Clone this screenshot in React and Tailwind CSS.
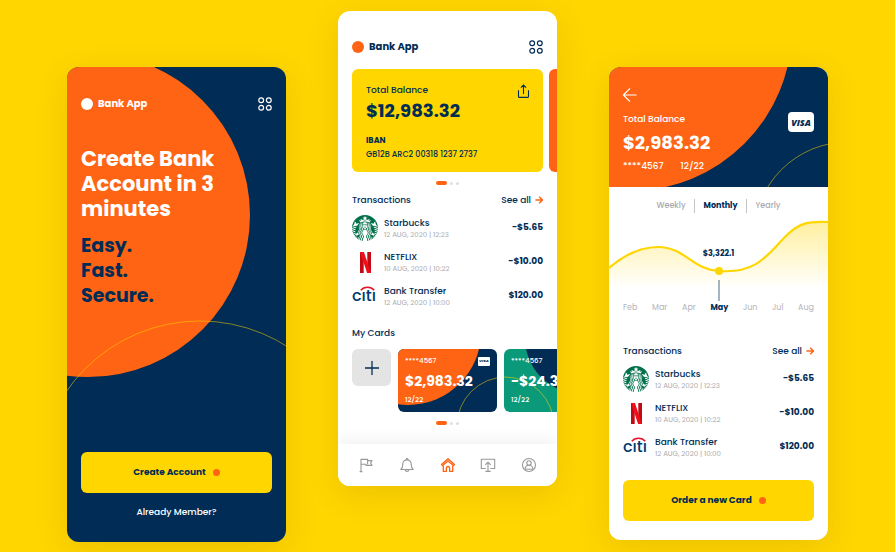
import React from "react";
import { SiStarbucks } from "react-icons/si";

const transactions = [
  { name: "Starbucks", date: "12 AUG, 2020 | 12:23", amount: "-$5.65", Logo: StarbucksLogo },
  { name: "NETFLIX", date: "10 AUG, 2020 | 10:22", amount: "-$10.00", Logo: NetflixLogo },
  { name: "Bank Transfer", date: "12 AUG, 2020 | 10:00", amount: "$120.00", Logo: CitiLogo },
];

const months = ["Feb", "Mar", "Apr", "May", "Jun", "Jul", "Aug"];

function StarbucksLogo() {
  return <SiStarbucks className="size-[26px] text-[#00704a]" aria-hidden="true" />;
}

function NetflixLogo() {
  return (
    <svg className="h-[21px] w-[11px]" viewBox="0 0 11 21" aria-hidden="true">
      <rect x="0" y="0" width="3.700" height="21" fill="#c20a14" />
      <rect x="7.300" y="0" width="3.700" height="21" fill="#c20a14" />
      <path d="M0 0h3.900L11 21H7.100z" fill="#ee0f1b" />
    </svg>
  );
}

function CitiLogo() {
  return (
    <span className="relative block w-[26px] text-[16px] leading-5 font-medium text-[#003b70]">
      <svg className="absolute top-0 left-2 h-[5px] w-[15px]" viewBox="0 0 15 5" fill="none" aria-hidden="true">
        <path d="M.8 4.300C4 .2 11 .2 14.200 4.300" stroke="#e4152b" strokeWidth="1.600" />
      </svg>
      cıtı
    </span>
  );
}

function Visa({ small }) {
  return small ? (
    <span className="flex h-[9px] w-3 items-center justify-center rounded-[1px] bg-white text-[4px] leading-none font-extrabold text-[#002c55] italic">
      VISA
    </span>
  ) : (
    <span className="flex h-5 w-[26px] items-center justify-center rounded-sm bg-white font-['Open_Sans'] text-[9px] leading-none font-extrabold text-[#002c55] italic">
      VISA
    </span>
  );
}

function Dots() {
  return (
    <div className="flex h-1 items-center justify-center gap-[3px]">
      <span className="h-1 w-[11px] rounded-full bg-[#ff6414]" />
      <span className="size-[3px] rounded-full bg-[#dcdfe4]" />
      <span className="size-[3px] rounded-full bg-[#dcdfe4]" />
    </div>
  );
}

function Header({ dot }) {
  return (
    <header className="flex h-4 items-center justify-between">
      <div className="flex items-center gap-[5px]">
        <span className={`size-3 rounded-full ${dot}`} />
        <span className="text-[10px] leading-4 font-bold">Bank App</span>
      </div>
      <button type="button" aria-label="Menu" className="size-[14px]">
        <svg viewBox="0 0 14 14" fill="none" stroke="currentColor" strokeWidth="1.200" aria-hidden="true">
          <circle cx="3.200" cy="3.200" r="2.400" />
          <circle cx="10.800" cy="3.200" r="2.400" />
          <circle cx="3.200" cy="10.800" r="2.400" />
          <circle cx="10.800" cy="10.800" r="2.400" />
        </svg>
      </button>
    </header>
  );
}

function Transactions() {
  return (
    <section className="px-[14px]">
      <div className="flex items-center justify-between text-[9px] leading-4 font-medium">
        <h2>Transactions</h2>
        <a href="#all" className="flex items-center gap-1">
          See all
          <svg className="size-2" viewBox="0 0 8 8" fill="none" stroke="#ff6414" strokeWidth="1.400" aria-hidden="true">
            <path d="M.4 4h7M4.200 .8L7.400 4 4.200 7.200" />
          </svg>
        </a>
      </div>
      <ul className="mt-[7px] flex flex-col gap-2">
        {transactions.map(({ name, date, amount, Logo }) => (
          <li key={name} className="flex h-[26px] items-center">
            <span className="flex w-[26px] justify-center">
              <Logo />
            </span>
            <div className="ml-1.5 flex-1">
              <p className="text-[9px] leading-[14px] font-medium">{name}</p>
              <p className="text-[7px] leading-[10px] text-[#a9a9ad]">{date}</p>
            </div>
            <span className="text-[9px] font-bold">{amount}</span>
          </li>
        ))}
      </ul>
    </section>
  );
}

function Phone({ className, children }) {
  return (
    <article
      className={`relative isolate min-w-0 overflow-hidden rounded-xl text-[#002c55] shadow-[0_8px_32px_rgba(110,80,0,0.14)] ${className}`}
    >
      {children}
    </article>
  );
}

function ActionButton({ children }) {
  return (
    <button
      type="button"
      className="flex h-[41px] w-full items-center justify-center gap-[7px] rounded-md bg-[#ffd600] text-[9px] font-bold text-[#002c55]"
    >
      {children}
      <span className="size-[7px] rounded-full bg-[#ff6414]" />
    </button>
  );
}

function Welcome() {
  return (
    <Phone className="mt-14 bg-[#002c55] px-[14px] pt-[29px] pb-[22px]">
      <svg className="absolute inset-0 -z-10 size-full" aria-hidden="true">
        <circle cx="21" cy="148" r="162" fill="#ff6414" />
        <circle cx="133" cy="416" r="162" fill="none" stroke="#ffd600" strokeOpacity=".65" strokeWidth=".8" />
      </svg>
      <div className="text-white">
        <Header dot="bg-white" />
        <h1 className="mt-[34px] max-w-[150px] text-[21px] leading-[25px] font-bold">Create Bank Account in 3 minutes</h1>
      </div>
      <p className="mt-3 max-w-[90px] text-[19px] leading-[25px] font-bold">Easy. Fast. Secure.</p>
      <div className="mt-36">
        <ActionButton>Create Account</ActionButton>
      </div>
      <a href="#login" className="mt-3 block text-center text-[9px] leading-[15px] font-medium text-white">
        Already Member?
      </a>
    </Phone>
  );
}

function MiniCard({ className, amount, visa, children }) {
  return (
    <div className={`relative isolate h-[63px] w-[99px] shrink-0 overflow-hidden rounded-md pt-[7px] pl-[7px] text-white ${className}`}>
      <svg className="absolute inset-0 -z-10 size-full" aria-hidden="true">
        {children}
      </svg>
      <div className="flex h-[10px] items-center justify-between pr-[7px]">
        <span className="text-[7px] leading-[10px] font-medium">****4567</span>
        {visa && <Visa small />}
      </div>
      <p className="mt-1.5 text-[14px] leading-[18px] font-bold">{amount}</p>
      <p className="mt-[5px] text-[7px] leading-[10px] font-medium">12/22</p>
    </div>
  );
}

const navItems = [
  {
    label: "Goals",
    icon: <path d="M2 .8v12.800M.6 13.600h2.800M2 1.400h6.600v1.200h4.400L11.600 5l1.400 2.400H7V6.200H2M8.600 2.600v3.600" />,
  },
  {
    label: "Notifications",
    icon: (
      <>
        <path d="M7 1.900c-2.700 0-4.200 1.900-4.200 4.300 0 3-.9 4.300-2 5.300h12.400c-1.100-1-2-2.300-2-5.300C11.200 3.800 9.700 1.900 7 1.900z" />
        <path d="M6.200 1.900V1.300a.8.8 0 011.600 0v.6M5.300 11.700a1.700 1.700 0 003.400 0" />
      </>
    ),
  },
  {
    label: "Home",
    active: true,
    icon: (
      <>
        <path d="M2.300 7.400v6h3.100v-3.300a1.600 1.600 0 013.200 0v3.300h3.100v-6" />
        <path d="M7 .7L.5 6.500l1.100 1.100L7 2.900l5.400 4.700 1.100-1.100z" />
      </>
    ),
  },
  {
    label: "Send",
    icon: (
      <>
        <path d="M4.600 10.500H.3V1.300h13.400v9.200H9.400M4.400 13.400h5.200" />
        <path d="M7 13.400V4.200M4.300 6.800L7 4.100l2.700 2.700" />
      </>
    ),
  },
  {
    label: "Profile",
    icon: (
      <>
        <circle cx="7" cy="7" r="6.500" />
        <circle cx="7" cy="5" r="2.200" />
        <path d="M3.100 11.200c0-2.500 1.500-4 3.900-4s3.900 1.500 3.900 4z" />
      </>
    ),
  },
];

function Home() {
  return (
    <Phone className="bg-white pt-7">
      <div className="px-[14px]">
        <Header dot="bg-[#ff6414]" />
      </div>
      <div className="mt-[14px] ml-[14px] flex gap-1.5 overflow-hidden">
        <section className="w-[calc(100%-14px)] shrink-0 rounded-md bg-[#ffd600] px-[14px] pt-[14px] pb-[11px]">
          <div className="flex h-[14px] items-start justify-between">
            <h2 className="text-[9px] leading-[14px] font-medium">Total Balance</h2>
            <button type="button" aria-label="Share" className="h-4 w-[11px]">
              <svg className="overflow-visible" viewBox="0 0 11 14" fill="none" stroke="currentColor" strokeWidth="1.100" aria-hidden="true">
                <path d="M.5 6.300v6.100c0 .6.4 1 1 1h8c.6 0 1-.4 1-1V6.300M5.500 10V1.200M2.900 3.600L5.500 1l2.600 2.600" />
              </svg>
            </button>
          </div>
          <p className="mt-0.5 text-[18px] leading-6 font-bold">$12,983.32</p>
          <h3 className="mt-3 text-[8px] leading-3 font-bold">IBAN</h3>
          <p className="mt-0.5 text-[8px] leading-3 font-medium">GB12B ARC2 00318 1237 2737</p>
        </section>
        <div className="w-full shrink-0 rounded-md bg-[#ff6414]" />
      </div>
      <div className="mt-[9px] mb-[7px]">
        <Dots />
      </div>
      <Transactions />
      <h2 className="mt-4 px-[14px] text-[9px] leading-4 font-medium">My Cards</h2>
      <div className="mt-2 ml-[14px] flex items-start gap-[7px] overflow-hidden">
        <button
          type="button"
          aria-label="Add card"
          className="flex h-[37px] w-[39px] shrink-0 items-center justify-center rounded-md bg-[#e4e4e4]"
        >
          <svg className="size-[14px]" viewBox="0 0 14 14" stroke="currentColor" strokeWidth="1.300" aria-hidden="true">
            <path d="M7 0v14M0 7h14" />
          </svg>
        </button>
        <MiniCard className="bg-[#002c55]" amount="$2,983.32" visa>
          <circle cx="10" cy="-17" r="73" fill="#ff6414" />
          <circle cx="108" cy="77" r="49" fill="none" stroke="#ffd600" strokeOpacity=".65" strokeWidth=".8" />
        </MiniCard>
        <MiniCard className="bg-[#0a9a7a]" amount="-$24.32">
          <circle cx="77" cy="-11" r="56" fill="#002c55" />
          <circle cx="1" cy="77" r="49" fill="none" stroke="#ffd600" strokeOpacity=".65" strokeWidth=".8" />
        </MiniCard>
      </div>
      <div className="mt-[9px]">
        <Dots />
      </div>
      <nav className="mt-[19px] flex h-[42px] items-center justify-between bg-white px-[21px] shadow-[0_-4px_16px_rgba(0,0,0,0.06)]">
        {navItems.map(({ label, icon, active }) => (
          <button
            key={label}
            type="button"
            aria-label={label}
            className={`size-[14px] ${active ? "text-[#ff6414]" : "text-[#98989b]"}`}
          >
            <svg
              className="overflow-visible"
              viewBox="0 0 14 14"
              fill="none"
              stroke="currentColor"
              strokeWidth={active ? "1.300" : "1.100"}
              strokeLinejoin="round"
              aria-hidden="true"
            >
              {icon}
            </svg>
          </button>
        ))}
      </nav>
    </Phone>
  );
}

function Details() {
  return (
    <Phone className="mt-14 bg-white pb-[19px]">
      <header className="relative isolate overflow-hidden bg-[#002c55] px-[14px] pt-[21px] pb-[14px] text-white">
        <svg className="absolute inset-0 -z-10 size-full" aria-hidden="true">
          <circle cx="21" cy="-38" r="162" fill="#ff6414" />
          <circle cx="239" cy="169" r="94" fill="none" stroke="#ffd600" strokeOpacity=".65" strokeWidth=".8" />
        </svg>
        <button type="button" aria-label="Back" className="block size-[14px]">
          <svg className="overflow-visible" viewBox="0 0 14 14" fill="none" stroke="currentColor" strokeWidth="1.200" aria-hidden="true">
            <path d="M13.600 7H.4M7 .4L.4 7 7 13.600" />
          </svg>
        </button>
        <div className="mt-[10px] flex items-start justify-between">
          <div>
            <h2 className="text-[9px] leading-[14px] font-medium">Total Balance</h2>
            <p className="mt-1.5 text-[18px] leading-[22px] font-bold">$2,983.32</p>
            <p className="mt-[5px] flex gap-[17px] text-[9px] leading-[14px] font-medium">
              <span>****4567</span>
              <span>12/22</span>
            </p>
          </div>
          <Visa />
        </div>
      </header>
      <div className="mt-3 flex items-center justify-center text-[8px] leading-[14px] font-medium text-[#a9a9ad]">
        <button type="button" className="pr-2">Weekly</button>
        <button type="button" className="border-x border-[#c4c4c8] px-[9px] font-bold text-[#002c55]">Monthly</button>
        <button type="button" className="pl-2">Yearly</button>
      </div>
      <div className="relative">
        <svg className="block w-full" viewBox="0 0 219 88" fill="none" role="img" aria-label="Balance by month">
          <defs>
            <linearGradient id="area" x1="0" y1="8" x2="0" y2="76" gradientUnits="userSpaceOnUse">
              <stop stopColor="#ffd600" stopOpacity=".38" />
              <stop offset="1" stopColor="#ffd600" stopOpacity="0" />
            </linearGradient>
          </defs>
          <path d="M0 55C15 42 32 34 49 34C76 34 84 57 110 58C150 61 160 39 178 22C190 10 200 8 219 9V88H0z" fill="url(#area)" />
          <path d="M0 55C15 42 32 34 49 34C76 34 84 57 110 58C150 61 160 39 178 22C190 10 200 8 219 9" stroke="#ffd600" strokeWidth="2.200" />
          <circle cx="110" cy="58" r="4" fill="#ffd600" />
          <path d="M110 67v21" stroke="#002c55" strokeOpacity=".7" />
        </svg>
        <span className="absolute top-[40%] left-1/2 w-12 -translate-x-1/2 text-center text-[8px] leading-3 font-bold">
          $3,322.1
        </span>
      </div>
      <ol className="flex justify-between px-[14px] text-[8px] leading-[14px] text-[#b3b3b7]">
        {months.map((m) => (
          <li key={m} className={m === "May" ? "font-bold text-[#002c55]" : ""}>
            {m}
          </li>
        ))}
      </ol>
      <div className="mt-7">
        <Transactions />
      </div>
      <div className="mt-5 px-[14px]">
        <ActionButton>Order a new Card</ActionButton>
      </div>
    </Phone>
  );
}

export default function App() {
  return (
    <main className="min-h-screen bg-[#ffd600] px-[67px] pt-[11px] pb-[10px] font-['Poppins','Inter',sans-serif]">
      <div className="mx-auto grid max-w-5xl grid-cols-3 items-start gap-[52px]">
        <Welcome />
        <Home />
        <Details />
      </div>
    </main>
  );
}
